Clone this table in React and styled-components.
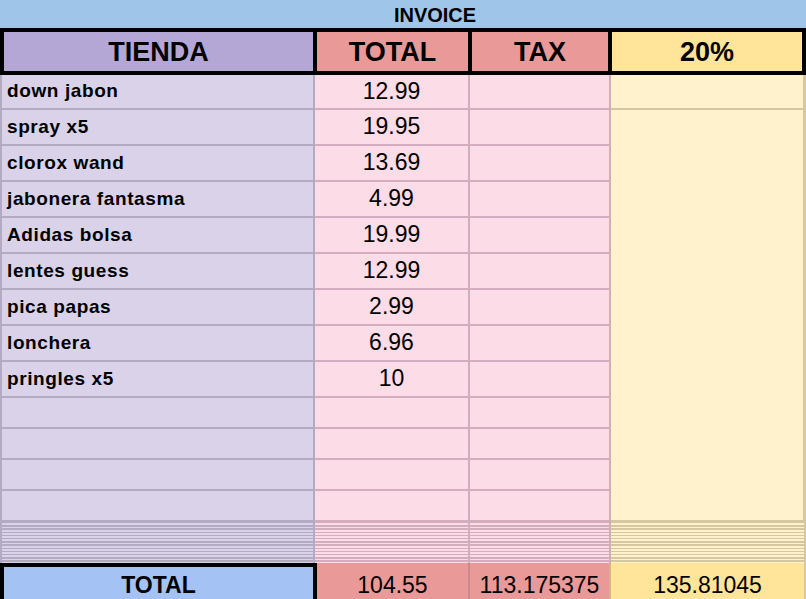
import React from 'react'
import styled, { createGlobalStyle } from 'styled-components'

const GlobalStyle = createGlobalStyle`
  html, body {
    margin: 0;
    padding: 0;
    background: #ffffff;
  }
  * {
    box-sizing: border-box;
  }
`

const items = [
  { name: 'down jabon', total: '12.99' },
  { name: 'spray x5', total: '19.95' },
  { name: 'clorox wand', total: '13.69' },
  { name: 'jabonera fantasma', total: '4.99' },
  { name: 'Adidas bolsa', total: '19.99' },
  { name: 'lentes guess', total: '12.99' },
  { name: 'pica papas', total: '2.99' },
  { name: 'lonchera', total: '6.96' },
  { name: 'pringles x5', total: '10' },
  { name: '', total: '' },
  { name: '', total: '' },
  { name: '', total: '' },
  { name: '', total: '' },
]

const palette = {
  purple: { bg: '#d9d2e9', line: '#b3aac3' },
  pink: { bg: '#fcdce7', line: '#d3adbd' },
  yellow: { bg: '#fff2cc', line: '#d7c7a1' },
}

const Sheet = styled.div`
  width: 806px;
  height: 599px;
  overflow: hidden;
  font-family: 'Liberation Sans', Arial, sans-serif;
  color: #000;
`

const TitleBar = styled.div`
  height: 28px;
  background: #9fc5e8;
  display: flex;
  align-items: center;
  justify-content: center;
  padding-left: 64px;
  font-size: 20px;
  font-weight: 700;
  padding-top: 2px;
`

const HeaderRow = styled.div`
  display: grid;
  grid-template-columns: 309px 151px 136px 1fr;
  gap: 4px;
  padding: 4px;
  background: #000;
`

const HeaderCell = styled.div`
  height: 39px;
  background: ${(p) => p.bg};
  display: flex;
  align-items: center;
  justify-content: center;
  font-size: 27px;
  font-weight: 700;
  padding-top: 2px;
`

const Body = styled.div`
  display: grid;
  grid-template-columns: 315px 155px 141px 1fr;
  grid-template-rows: 35px repeat(8, 36px) repeat(4, 31px);
`

const Cell = styled.div`
  background: ${(p) => palette[p.tone].bg};
  border-right: 2px solid ${(p) => palette[p.tone].line};
  border-bottom: 2px solid ${(p) => palette[p.tone].line};
  border-left: ${(p) => (p.first ? `2px solid ${palette[p.tone].line}` : 'none')};
  display: flex;
  align-items: center;
  padding-bottom: 1px;
`

const Label = styled(Cell)`
  padding-left: 5px;
  font-size: 19px;
  font-weight: 700;
  letter-spacing: 0.6px;
`

const Amount = styled(Cell)`
  justify-content: center;
  font-size: 23px;
`

const MergedCell = styled(Cell)`
  grid-column: 4;
  grid-row: 2 / span 12;
  border-right-width: 3px;
`

const Collapsed = styled.div`
  display: grid;
  grid-template-columns: 315px 155px 141px 1fr;
  height: 41px;
`

const CollapsedCell = styled.div`
  border-right: 2px solid ${(p) => palette[p.tone].line};
  border-left: ${(p) => (p.first ? `2px solid ${palette[p.tone].line}` : 'none')};
  background: repeating-linear-gradient(
    to bottom,
    ${(p) => palette[p.tone].line} 0px,
    ${(p) => palette[p.tone].line} 1.5px,
    ${(p) => palette[p.tone].bg} 1.5px,
    ${(p) => palette[p.tone].bg} 3.2px
  );
`

const TotalRow = styled.div`
  display: grid;
  grid-template-columns: 317px 153px 141px 1fr;
  height: 38px;
`

const TotalLabel = styled.div`
  background: #a4c2f4;
  border: 4px solid #000;
  border-bottom: none;
  display: flex;
  align-items: center;
  justify-content: center;
  font-size: 23px;
  font-weight: 700;
  padding-top: 2px;
`

const TotalValue = styled.div`
  background: ${(p) => p.bg};
  border-right: 2px solid ${(p) => p.line};
  display: flex;
  align-items: center;
  justify-content: center;
  font-size: 23px;
  padding-top: 6px;
`

export default function App() {
  return (
    <>
      <GlobalStyle />
      <Sheet>
        <TitleBar>INVOICE</TitleBar>
        <HeaderRow>
          <HeaderCell bg="#b4a7d6">TIENDA</HeaderCell>
          <HeaderCell bg="#ea9999">TOTAL</HeaderCell>
          <HeaderCell bg="#ea9999">TAX</HeaderCell>
          <HeaderCell bg="#ffe599">20%</HeaderCell>
        </HeaderRow>
        <Body>
          {items.map((item, i) => (
            <React.Fragment key={i}>
              <Label tone="purple" first style={{ gridRow: i + 1 }}>
                {item.name}
              </Label>
              <Amount tone="pink" style={{ gridRow: i + 1 }}>
                {item.total}
              </Amount>
              <Amount tone="pink" style={{ gridRow: i + 1 }} />
              {i === 0 && <Cell tone="yellow" style={{ gridRow: 1, gridColumn: 4, borderRightWidth: 3 }} />}
            </React.Fragment>
          ))}
          <MergedCell tone="yellow" />
        </Body>
        <Collapsed>
          <CollapsedCell tone="purple" first />
          <CollapsedCell tone="pink" />
          <CollapsedCell tone="pink" />
          <CollapsedCell tone="yellow" />
        </Collapsed>
        <TotalRow>
          <TotalLabel>TOTAL</TotalLabel>
          <TotalValue bg="#ea9999" line="#c98a8a">104.55</TotalValue>
          <TotalValue bg="#ea9999" line="#d8b48a">113.175375</TotalValue>
          <TotalValue bg="#ffe599" line="#d7c7a1">135.81045</TotalValue>
        </TotalRow>
      </Sheet>
    </>
  )
}
